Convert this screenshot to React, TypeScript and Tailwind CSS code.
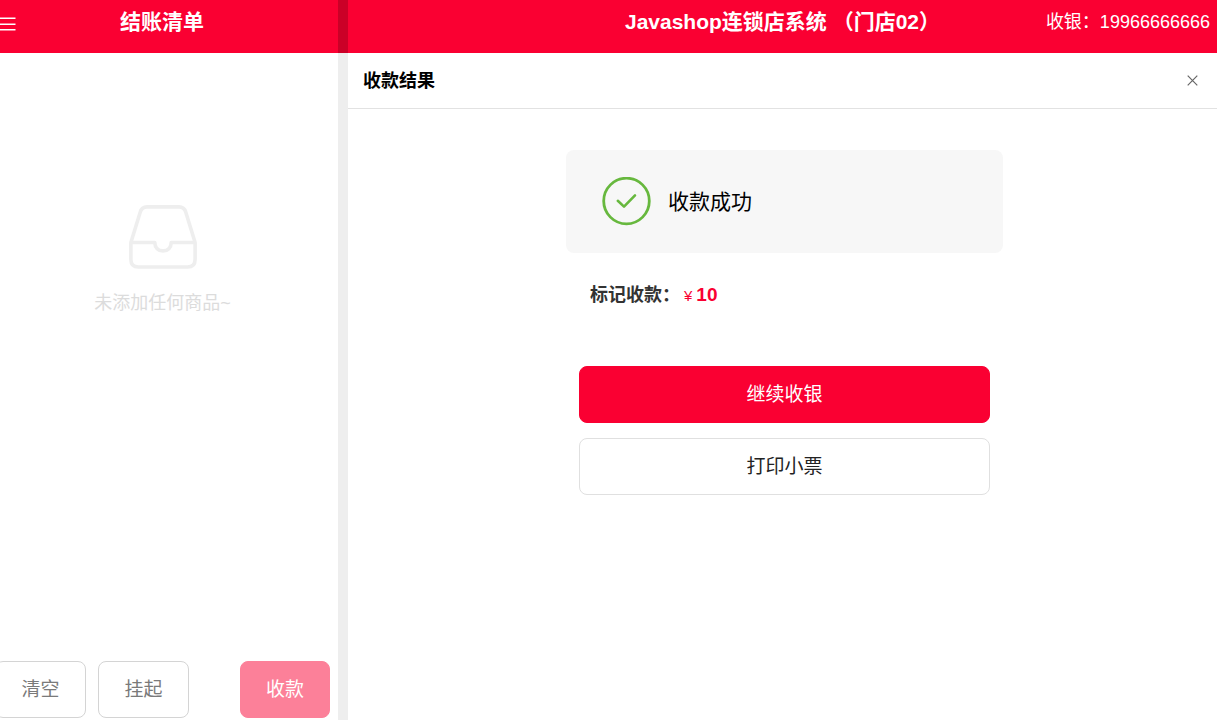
import type { ButtonHTMLAttributes } from 'react'
import clsx from 'clsx'

type Variant = 'primary' | 'outline'

type ActionButtonProps = ButtonHTMLAttributes<HTMLButtonElement> & {
  variant?: Variant
}

const variants: Record<Variant, string> = {
  primary: 'border-[#fa0032] bg-[#fa0032] text-white disabled:border-[#fc8099] disabled:bg-[#fc8099]',
  outline: 'border-[#e0e0e0] bg-white text-[#222222] disabled:border-[#d4d4d4] disabled:text-[#7a7a7a]',
}

function ActionButton({ variant = 'outline', className, children, ...rest }: ActionButtonProps) {
  return (
    <button
      type="button"
      className={clsx('h-[57px] rounded-lg border text-[19px] leading-7', variants[variant], className)}
      {...rest}
    >
      {children}
    </button>
  )
}

function MenuIcon() {
  return (
    <svg width="16" height="16" viewBox="0 0 16 16" fill="none" stroke="currentColor" strokeWidth="1.5">
      <path d="M0 2.2h15.5M0 8.2h15.5M0 13.8h15.5" />
    </svg>
  )
}

function CloseIcon() {
  return (
    <svg width="11" height="11" viewBox="0 0 11 11" fill="none" stroke="currentColor" strokeWidth="1.2">
      <path d="M0.7 0.7l9.6 9.6M10.3 0.7L0.7 10.3" />
    </svg>
  )
}

function InboxIcon() {
  return (
    <svg
      width="68"
      height="64"
      viewBox="0 0 68 64"
      fill="none"
      stroke="currentColor"
      strokeWidth="3.6"
      strokeLinejoin="round"
    >
      <path d="M1.9 37.5L11.2 7.2Q12.8 1.9 18 1.9H50Q55.2 1.9 56.8 7.2L66.1 37.5V54.5Q66.1 62 58.6 62H9.4Q1.9 62 1.9 54.5Z" />
      <path d="M1.9 37.5H25.8C25.8 42.6 29.2 45.9 34 45.9S42.2 42.6 42.2 37.5H66.1" />
    </svg>
  )
}

function SuccessIcon() {
  return (
    <svg
      width="49"
      height="49"
      viewBox="0 0 49 49"
      fill="none"
      stroke="currentColor"
      strokeWidth="2.8"
      strokeLinecap="round"
      strokeLinejoin="round"
    >
      <circle cx="24.5" cy="24" r="22.8" />
      <path d="M15.8 23.8l6.2 5.8L33 18.4" strokeWidth="2.6" />
    </svg>
  )
}

function Sidebar() {
  return (
    <aside className="flex w-[338px] shrink-0 flex-col">
      <header className="flex h-[53px] items-center bg-[#fa0032] pr-[14px] pb-[10px] text-white">
        <button type="button" aria-label="菜单" className="w-4 pt-1">
          <MenuIcon />
        </button>
        <h2 className="flex-1 pr-4 text-center text-[21px] leading-7 font-bold">结账清单</h2>
      </header>

      <div className="flex flex-1 flex-col items-center pt-[152px] pr-[13px]">
        <span className="text-[#eeeeee]">
          <InboxIcon />
        </span>
        <p className="mt-5 text-[18px] leading-7 text-[#dcdcdc]">未添加任何商品~</p>
      </div>

      <footer className="-ml-[5px] flex gap-3 pr-2 pb-[2px]">
        <ActionButton disabled className="w-[91px]">清空</ActionButton>
        <ActionButton disabled className="w-[91px]">挂起</ActionButton>
        <ActionButton disabled variant="primary" className="ml-auto w-[90px]">收款</ActionButton>
      </footer>
    </aside>
  )
}

function PaymentResult({ amount }: { amount: number }) {
  return (
    <section className="mx-auto w-full max-w-[437px] pt-[41px]">
      <div className="flex h-[103px] items-center gap-[17px] rounded-lg bg-[#f7f7f7] px-9 text-[21px] leading-7 text-black">
        <span className="text-[#67b83e]">
          <SuccessIcon />
        </span>
        收款成功
      </div>

      <p className="mt-7 flex items-baseline px-6 text-[18px] leading-7 text-[#333333]">
        <span className="font-bold">标记收款：</span>
        <span className="ml-1 text-[15px] text-[#fa0032]">¥</span>
        <span className="ml-1 text-[19px] font-bold text-[#fa0032]">{amount}</span>
      </p>

      <div className="mt-14 flex flex-col gap-[15px] px-[13px]">
        <ActionButton variant="primary">继续收银</ActionButton>
        <ActionButton>打印小票</ActionButton>
      </div>
    </section>
  )
}

export default function App() {
  return (
    <div className="flex min-h-screen overflow-hidden bg-white font-['Liberation_Sans','Noto_Sans_CJK_SC',sans-serif]">
      <Sidebar />

      <div className="flex w-[10px] shrink-0 flex-col bg-[#eeeeee]">
        <div className="h-[53px] bg-[#cb0027]" />
      </div>

      <main className="min-w-0 flex-1">
        <header className="grid h-[53px] grid-cols-[1fr_auto_1fr] items-center bg-[#fa0032] pb-[10px] text-white">
          <h1 className="col-start-2 text-[21px] leading-7 font-bold whitespace-nowrap">
            Javashop连锁店系统 （门店02）
          </h1>
          <span className="pr-[7px] text-right text-[18px] leading-7 whitespace-nowrap">收银：19966666666</span>
        </header>

        <div className="flex h-14 items-center justify-between border-b border-[#e2e2e2] pr-[19px] pl-[15px]">
          <h2 className="text-[18px] leading-7 font-bold text-black">收款结果</h2>
          <button type="button" aria-label="关闭" className="text-[#666666]">
            <CloseIcon />
          </button>
        </div>

        <div className="pl-1">
          <PaymentResult amount={10} />
        </div>
      </main>
    </div>
  )
}
